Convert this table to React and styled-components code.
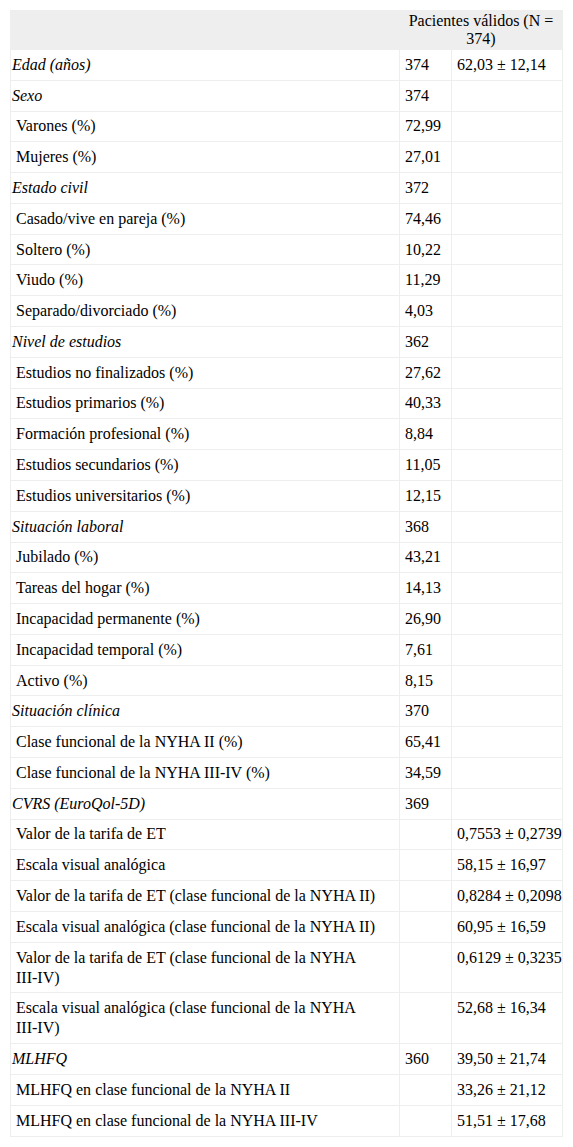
import React from 'react';
import styled, { createGlobalStyle } from 'styled-components';

const rows = [
  { label: 'Edad (años)', group: true, n: '374', value: '62,03 ± 12,14' },
  { label: 'Sexo', group: true, n: '374' },
  { label: 'Varones (%)', n: '72,99' },
  { label: 'Mujeres (%)', n: '27,01' },
  { label: 'Estado civil', group: true, n: '372' },
  { label: 'Casado/vive en pareja (%)', n: '74,46' },
  { label: 'Soltero (%)', n: '10,22' },
  { label: 'Viudo (%)', n: '11,29' },
  { label: 'Separado/divorciado (%)', n: '4,03' },
  { label: 'Nivel de estudios', group: true, n: '362' },
  { label: 'Estudios no finalizados (%)', n: '27,62' },
  { label: 'Estudios primarios (%)', n: '40,33' },
  { label: 'Formación profesional (%)', n: '8,84' },
  { label: 'Estudios secundarios (%)', n: '11,05' },
  { label: 'Estudios universitarios (%)', n: '12,15' },
  { label: 'Situación laboral', group: true, n: '368' },
  { label: 'Jubilado (%)', n: '43,21' },
  { label: 'Tareas del hogar (%)', n: '14,13' },
  { label: 'Incapacidad permanente (%)', n: '26,90' },
  { label: 'Incapacidad temporal (%)', n: '7,61' },
  { label: 'Activo (%)', n: '8,15' },
  { label: 'Situación clínica', group: true, n: '370' },
  { label: 'Clase funcional de la NYHA II (%)', n: '65,41' },
  { label: 'Clase funcional de la NYHA III-IV (%)', n: '34,59' },
  { label: 'CVRS (EuroQol-5D)', group: true, n: '369' },
  { label: 'Valor de la tarifa de ET', value: '0,7553 ± 0,2739' },
  { label: 'Escala visual analógica', value: '58,15 ± 16,97' },
  { label: 'Valor de la tarifa de ET (clase funcional de la NYHA II)', value: '0,8284 ± 0,2098' },
  { label: 'Escala visual analógica (clase funcional de la NYHA II)', value: '60,95 ± 16,59' },
  { label: 'Valor de la tarifa de ET (clase funcional de la NYHA III-IV)', value: '0,6129 ± 0,3235' },
  { label: 'Escala visual analógica (clase funcional de la NYHA III-IV)', value: '52,68 ± 16,34' },
  { label: 'MLHFQ', group: true, n: '360', value: '39,50 ± 21,74' },
  { label: 'MLHFQ en clase funcional de la NYHA II', value: '33,26 ± 21,12' },
  { label: 'MLHFQ en clase funcional de la NYHA III-IV', value: '51,51 ± 17,68' },
];

// words with a hyphen ("III-IV)") must not break at the hyphen
const Label = ({ text }) =>
  text.split(' ').map((w, i) => (
    <React.Fragment key={i}>
      {i > 0 && ' '}
      {w.includes('-') ? <NoBreak>{w}</NoBreak> : w}
    </React.Fragment>
  ));

const App = () => (
  <>
    <GlobalStyle />
    <Page>
      <Table>
        <colgroup>
          <Col $w={389} />
          <Col $w={52} />
          <Col $w={111} />
        </colgroup>
        <thead>
          <tr>
            <HeadCell />
            <HeadCell colSpan={2}>Pacientes válidos (N = 374)</HeadCell>
          </tr>
        </thead>
        <tbody>
          {rows.map((r) => (
            <tr key={r.label}>
              <LabelCell $group={r.group}>
                <Label text={r.label} />
              </LabelCell>
              <Cell>{r.n}</Cell>
              <Cell>{r.value}</Cell>
            </tr>
          ))}
        </tbody>
      </Table>
    </Page>
  </>
);

const GlobalStyle = createGlobalStyle`
  body {
    margin: 0;
    background: #fff;
    font-family: "Liberation Serif", "Times New Roman", serif;
    color: #000;
  }
`;

const Page = styled.div`
  padding: 10px 11px 10px 10px;
`;

const Table = styled.table`
  width: 552px;
  table-layout: fixed;
  border-collapse: collapse;
`;

const Col = styled.col`
  width: ${(p) => p.$w}px;
`;

const NoBreak = styled.span`
  white-space: nowrap;
`;

const HeadCell = styled.th`
  background: #eeeeee;
  border: 1px solid #eeeeee;
  font-family: "Liberation Serif", "Times New Roman", serif;
  font-size: 16px;
  font-weight: normal;
  color: #000;
  text-align: center;
  line-height: 18px;
  padding: 1px 4px;
  vertical-align: middle;
`;

const Cell = styled.td`
  border: 1px solid #eeeeee;
  font-family: "Liberation Serif", "Times New Roman", serif;
  font-size: 16px;
  color: #000;
  line-height: 20px;
  padding: 4.9px 0 4.9px 5px;
  vertical-align: top;
  white-space: nowrap;
`;

const LabelCell = styled(Cell)`
  white-space: normal;
  padding-left: ${(p) => (p.$group ? '1px' : '5px')};
  font-style: ${(p) => (p.$group ? 'italic' : 'normal')};
`;

export default App;
